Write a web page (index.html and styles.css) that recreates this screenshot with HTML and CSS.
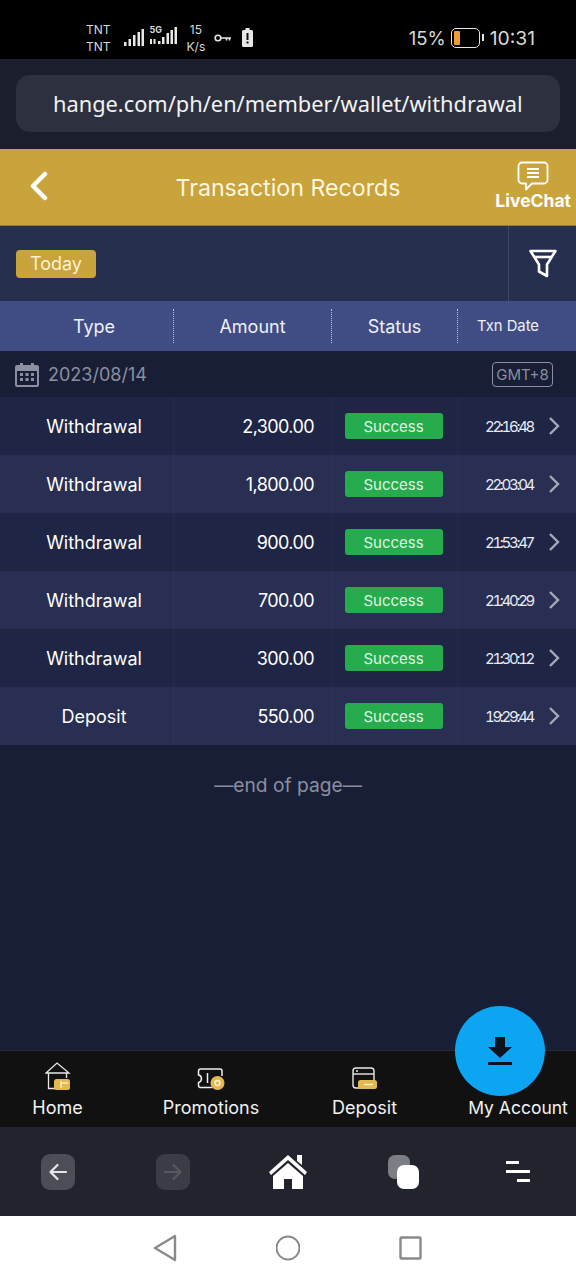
FILE: index.html
```html
<!DOCTYPE html>
<html lang="en">

<head>
  <meta charset="UTF-8" />
  <meta name="viewport" content="width=device-width, initial-scale=1.0" />
  <title>Transaction Records</title>
  <link rel="stylesheet" href="styles.css">
</head>

<body>
  <div class="phone">
    <!-- android status bar -->
    <div class="status-bar">
      <div class="carriers"><span>TNT</span><span>TNT</span></div>
      <svg class="signal" width="20" height="18" viewBox="0 0 20 18" fill="#e8e8e8">
        <rect x="0" y="13" width="2.5" height="4" /><rect x="4.5" y="10" width="2.5" height="7" /><rect x="9" y="6" width="2.5" height="11" /><rect x="13.500" y="3" width="2.500" height="14" /><rect x="17.500" y="0" width="2.500" height="17" />
      </svg>
      <div class="signal-5g">
        <svg width="27" height="18" viewBox="0 0 27 18" fill="#e8e8e8">
          <rect x="0" y="12" width="2" height="5" /><rect x="3.500" y="12" width="2" height="5" /><rect x="8" y="14" width="2.500" height="3" /><rect x="12" y="10" width="2.500" height="7" /><rect x="16.500" y="6" width="2.500" height="11" /><rect x="20.500" y="3" width="2.500" height="14" /><rect x="24.500" y="0" width="2.500" height="17" />
        </svg>
        <span class="label-5g">5G</span>
      </div>
      <div class="speed"><span>15</span><span>K/s</span></div>
      <svg class="key" width="18" height="8" viewBox="0 0 18 8" fill="none" stroke="#e8e8e8" stroke-width="1.600">
        <circle cx="4" cy="4" r="2.800" /><path d="M7 4h10M12.500 4v2.500M15.500 4v2.500" />
      </svg>
      <svg class="saver" width="11" height="19" viewBox="0 0 11 19">
        <path d="M3.500 0h4v2h2a1.500 1.500 0 0 1 1.500 1.500V17.500a1.500 1.500 0 0 1-1.500 1.500h-8A1.500 1.500 0 0 1 0 17.500V3.500A1.500 1.500 0 0 1 1.500 2h2z" fill="#e8e8e8" />
        <rect x="4.500" y="5" width="2" height="7" fill="#111" /><rect x="4.500" y="13.500" width="2" height="2" fill="#111" />
      </svg>
      <div class="status-right">
        <span>15%</span>
        <span class="battery"><span class="battery-level"></span></span>
        <span class="battery-tip"></span>
        <span class="clock">10:31</span>
      </div>
    </div>

    <!-- browser address bar -->
    <div class="address-bar">
      <div class="address-field">hange.com/ph/en/member/wallet/withdrawal</div>
    </div>

    <header class="page-header">
      <svg class="back" width="20" height="30" viewBox="0 0 20 30" fill="none" stroke="#fff" stroke-width="4.500" stroke-linecap="round" stroke-linejoin="round">
        <path d="M16 3 L4 15 L16 27" />
      </svg>
      <h1>Transaction Records</h1>
      <div class="livechat">
        <svg width="32" height="30" viewBox="0 0 32 30" fill="none" stroke="#fff" stroke-width="1.800" stroke-linejoin="round">
          <path d="M5 1.500h22a3.500 3.500 0 0 1 3.500 3.500v14a3.500 3.500 0 0 1-3.500 3.500H15l-6 6v-6H5A3.500 3.500 0 0 1 1.500 19V5A3.500 3.500 0 0 1 5 1.500z" />
          <path d="M10 8h12M10 12h12M10 16h12" />
        </svg>
        <span>LiveChat</span>
      </div>
    </header>

    <div class="filter-row">
      <div class="filter-left"><span class="today">Today</span></div>
      <div class="filter-btn">
        <svg width="28" height="30" viewBox="0 0 28 30" fill="none" stroke="#fff" stroke-width="2.600" stroke-linejoin="round">
          <path d="M1.500 2h25L18 15.500V27l-8-4.500v-7z" /><path d="M5 8h18" />
        </svg>
      </div>
    </div>

    <div class="table-head">
      <div class="head-cell">Type</div>
      <div class="head-cell">Amount</div>
      <div class="head-cell">Status</div>
      <div class="head-cell head-small">Txn Date</div>
    </div>

    <div class="date-row">
      <svg width="24" height="25" viewBox="0 0 24 25" fill="#8b8f9f">
        <path d="M2 3h3V1h3v2h8V1h3v2h3a2 2 0 0 1 2 2v18a2 2 0 0 1-2 2H2a2 2 0 0 1-2-2V5a2 2 0 0 1 2-2z" />
        <rect x="2" y="9" width="20" height="14" fill="#181e35" />
        <rect x="5" y="11" width="3" height="3" /><rect x="10.500" y="11" width="3" height="3" /><rect x="16" y="11" width="3" height="3" /><rect x="5" y="16" width="3" height="3" /><rect x="10.500" y="16" width="3" height="3" /><rect x="16" y="16" width="3" height="3" />
      </svg>
      <span class="date-text">2023/08/14</span>
      <span class="gmt">GMT+8</span>
    </div>

    <div class="rows">
      <div class="row">
        <div class="cell-type">Withdrawal</div><div class="cell-amount">2,300.00</div>
        <div class="cell-status"><span class="badge">Success</span></div>
        <div class="cell-time"><span class="time">22:16:48</span><svg width="12" height="20" viewBox="0 0 12 20" fill="none" stroke="#a6a9b8" stroke-width="2.400"><path d="M2 2l8 8-8 8" /></svg></div>
      </div>
      <div class="row">
        <div class="cell-type">Withdrawal</div><div class="cell-amount">1,800.00</div>
        <div class="cell-status"><span class="badge">Success</span></div>
        <div class="cell-time"><span class="time">22:03:04</span><svg width="12" height="20" viewBox="0 0 12 20" fill="none" stroke="#a6a9b8" stroke-width="2.400"><path d="M2 2l8 8-8 8" /></svg></div>
      </div>
      <div class="row">
        <div class="cell-type">Withdrawal</div><div class="cell-amount">900.00</div>
        <div class="cell-status"><span class="badge">Success</span></div>
        <div class="cell-time"><span class="time">21:53:47</span><svg width="12" height="20" viewBox="0 0 12 20" fill="none" stroke="#a6a9b8" stroke-width="2.400"><path d="M2 2l8 8-8 8" /></svg></div>
      </div>
      <div class="row">
        <div class="cell-type">Withdrawal</div><div class="cell-amount">700.00</div>
        <div class="cell-status"><span class="badge">Success</span></div>
        <div class="cell-time"><span class="time">21:40:29</span><svg width="12" height="20" viewBox="0 0 12 20" fill="none" stroke="#a6a9b8" stroke-width="2.400"><path d="M2 2l8 8-8 8" /></svg></div>
      </div>
      <div class="row">
        <div class="cell-type">Withdrawal</div><div class="cell-amount">300.00</div>
        <div class="cell-status"><span class="badge">Success</span></div>
        <div class="cell-time"><span class="time">21:30:12</span><svg width="12" height="20" viewBox="0 0 12 20" fill="none" stroke="#a6a9b8" stroke-width="2.400"><path d="M2 2l8 8-8 8" /></svg></div>
      </div>
      <div class="row">
        <div class="cell-type">Deposit</div><div class="cell-amount">550.00</div>
        <div class="cell-status"><span class="badge">Success</span></div>
        <div class="cell-time"><span class="time">19:29:44</span><svg width="12" height="20" viewBox="0 0 12 20" fill="none" stroke="#a6a9b8" stroke-width="2.400"><path d="M2 2l8 8-8 8" /></svg></div>
      </div>
    </div>

    <main class="page-end">—end of page—</main>

    <nav class="tab-bar">
      <div class="tab">
        <svg width="26" height="30" viewBox="0 0 26 30" fill="none" stroke="#e8e8e8" stroke-width="1.300">
          <path d="M1 11L12 1l12 10H1z" /><path d="M3.500 11v15.500h10" /><path d="M21.500 11v5" />
          <rect x="9" y="17" width="16" height="11" rx="2.500" fill="#e3b94f" stroke="none" />
          <path d="M16 19v7M16 21h7" stroke="#fff3c9" />
        </svg>
        <span>Home</span>
      </div>
      <div class="tab">
        <svg width="28" height="26" viewBox="0 0 28 26" fill="none" stroke="#f0f0f0" stroke-width="1.500">
          <path d="M3 3h20a2 2 0 0 1 2 2v5M3 3a2 2 0 0 0-1.500 2v4c2 .5 3 2 3 3.500S3 16 1.500 16.500v3A2 2 0 0 0 3 21.500h12" /><path d="M10.500 7v10" />
          <circle cx="20.500" cy="17" r="7" fill="#e3b94f" stroke="none" /><circle cx="20.500" cy="17" r="2.500" stroke="#fff3c9" />
        </svg>
        <span>Promotions</span>
      </div>
      <div class="tab">
        <svg width="26" height="26" viewBox="0 0 26 26" fill="none" stroke="#e8e8e8" stroke-width="1.400">
          <rect x="1" y="2" width="21" height="20" rx="3" /><path d="M1 8h21" /><path d="M4 5h2" />
          <rect x="6" y="14" width="19" height="9" rx="2.500" fill="#e3b94f" stroke="none" /><path d="M12 18.500h9" stroke="#fff3c9" />
        </svg>
        <span>Deposit</span>
      </div>
      <div class="tab tab-account">
        <div class="tab-icon-spacer"></div>
        <span>My Account</span>
      </div>
    </nav>

    <button class="fab" aria-label="Download">
      <svg width="24" height="29" viewBox="0 0 24 29" fill="#0c1220">
        <path d="M7 0h10v10h7L12 21 0 10h7z" /><rect x="0" y="25" width="24" height="3" />
      </svg>
    </button>

    <!-- browser toolbar -->
    <div class="browser-bar">
      <div class="square-btn">
        <svg width="20" height="20" viewBox="0 0 20 20" fill="none" stroke="#e6e6e8" stroke-width="2.200" stroke-linecap="round" stroke-linejoin="round"><path d="M18 10H3M9.500 3L2.500 10l7 7" /></svg>
      </div>
      <div class="square-btn square-off">
        <svg width="20" height="20" viewBox="0 0 20 20" fill="none" stroke="#55585f" stroke-width="2.200" stroke-linecap="round" stroke-linejoin="round"><path d="M2 10h15M10.500 3l7 7-7 7" /></svg>
      </div>
      <svg width="40" height="36" viewBox="0 0 40 36" fill="#fff">
        <path d="M29 1h5v10l-5-4z" />
        <path d="M20 1L39 18l-2 3L20 6 3 21l-2-3z" />
        <path d="M20 9L35 22v13H24V25h-8v10H5V22z" />
      </svg>
      <div class="tabs-icon"><span class="tabs-back"></span><span class="tabs-front"></span></div>
      <div class="menu-icon"><span class="menu-a"></span><span class="menu-b"></span><span class="menu-c"></span></div>
    </div>

    <!-- android nav -->
    <div class="system-nav">
      <svg width="24" height="28" viewBox="0 0 24 28" fill="none" stroke="#8a8a8a" stroke-width="2.400" stroke-linejoin="round"><path d="M22 2v24L2 14z" /></svg>
      <svg width="24" height="26" viewBox="0 0 24 26" fill="none" stroke="#8a8a8a" stroke-width="2"><circle cx="12" cy="13" r="11.500" /></svg>
      <svg width="24" height="24" viewBox="0 0 24 24" fill="none" stroke="#8a8a8a" stroke-width="2.400" stroke-linejoin="round"><rect x="1.500" y="1.500" width="20" height="21" rx="1" /></svg>
    </div>
  </div>
</body>

</html>
```

FILE: styles.css
```css
* {
  box-sizing: border-box;
}

body {
  margin: 0;
  background-color: #181e35;
  color: #fff;
  font-family: 'Inter', 'Noto Sans', sans-serif;
}

.phone {
  position: relative;
  display: flex;
  flex-direction: column;
  width: 576px;
  height: 1280px;
  overflow: hidden;
}

/* status bar */
.status-bar {
  display: flex;
  align-items: center;
  flex-shrink: 0;
  height: 59px;
  padding: 16px 41px 0 86px;
  background-color: #000;
  color: #d8d8d8;
}

.carriers,
.speed {
  display: flex;
  flex-direction: column;
  align-items: center;
  font-size: 12px;
  line-height: 17px;
}

.signal {
  margin-left: 13px;
}

.signal-5g {
  position: relative;
  margin-left: 6px;
}

.label-5g {
  position: absolute;
  top: -2px;
  left: 0;
  font-size: 9px;
  font-weight: 700;
  line-height: 10px;
}

.speed {
  margin-left: 10px;
}

.key {
  margin-left: 9px;
}

.saver {
  margin-left: 10px;
}

.status-right {
  display: flex;
  align-items: center;
  margin-left: auto;
  font-size: 18.500px;
}

.battery {
  display: block;
  width: 29px;
  height: 20px;
  margin-left: 5px;
  padding: 2px;
  border: 1.500px solid #e4e4e4;
  border-radius: 5px;
}

.battery-level {
  display: block;
  width: 6px;
  height: 100%;
  border-radius: 1px;
  background-color: #f09a37;
}

.battery-tip {
  display: block;
  width: 2px;
  height: 7px;
  margin-left: 2px;
  background-color: #e4e4e4;
}

.clock {
  margin-left: 6px;
  font-size: 19.300px;
}

/* address bar */
.address-bar {
  flex-shrink: 0;
  height: 90px;
  padding: 16px 16px 15px;
  background-color: #1b1f2d;
  border-bottom: 2px solid #1b1f2d;
}

.address-field {
  display: flex;
  align-items: center;
  height: 57px;
  padding-left: 37px;
  border-radius: 14px;
  background-color: #2d303f;
  color: #f2f2f2;
  font-family: 'Noto Sans', sans-serif;
  font-size: 21.800px;
  white-space: nowrap;
}

/* page header */
.page-header {
  position: relative;
  display: flex;
  align-items: center;
  justify-content: center;
  flex-shrink: 0;
  height: 77px;
  padding-top: 1px;
  background-color: #c9a33c;
  border-bottom: 1px solid #8f7a3e;
}

.page-header h1 {
  margin: 0;
  color: #fdf6df;
  font-size: 23.200px;
  font-weight: 400;
}

.back {
  position: absolute;
  top: 22px;
  left: 29px;
}

.livechat {
  position: absolute;
  top: 12px;
  right: 5px;
  display: flex;
  flex-direction: column;
  align-items: center;
  font-size: 17.500px;
  font-weight: 700;
  line-height: 20px;
}

.filter-row {
  display: flex;
  flex-shrink: 0;
  height: 75px;
  background-color: #272f4f;
}

.filter-left {
  display: flex;
  flex: 1;
  align-items: center;
  padding-left: 16px;
}

.today {
  display: flex;
  align-items: center;
  justify-content: center;
  width: 80px;
  height: 28px;
  border-radius: 4px;
  background-color: #c9a33c;
  color: #fdf2d0;
  font-size: 18px;
}

.filter-btn {
  display: flex;
  align-items: center;
  justify-content: center;
  width: 68px;
  border-left: 1px solid #3f4767;
}

/* table */
.table-head,
.row {
  display: grid;
  grid-template-columns: 173px 158px 126px 119px;
}

.table-head {
  flex-shrink: 0;
  align-items: center;
  height: 50px;
  background-color: #404d84;
  color: #eef0f8;
}

.head-cell {
  display: flex;
  align-items: center;
  justify-content: center;
  height: 34px;
  font-size: 18px;
  border-left: 1px dotted #b7bfdc;
}

.head-cell:first-child {
  padding-left: 15px;
  border-left: none;
}

.head-small {
  padding-right: 18px;
  font-size: 14.800px;
}

.date-row {
  display: flex;
  align-items: center;
  flex-shrink: 0;
  height: 46px;
  padding: 0 23px 0 15px;
  background-color: #181e35;
  color: #8b8f9f;
}

.date-text {
  margin-left: 9px;
  font-size: 18px;
}

.gmt {
  display: flex;
  align-items: center;
  justify-content: center;
  width: 61px;
  height: 25px;
  margin-left: auto;
  border: 1.500px solid #8b8f9f;
  border-radius: 4px;
  font-size: 15px;
}

.row {
  align-items: center;
  height: 58px;
  background-color: #1f2545;
  font-size: 18px;
}

.row:nth-child(even) {
  background-color: #282f52;
}

.cell-type,
.cell-amount,
.cell-status,
.cell-time {
  display: flex;
  align-items: center;
  height: 100%;
  border-left: 1px solid rgba(255, 255, 255, 0.03);
}

.cell-type {
  justify-content: center;
  padding-left: 15px;
  border-left: none;
}

.cell-amount {
  justify-content: flex-end;
  padding-right: 17px;
  letter-spacing: -0.600px;
}

.cell-status {
  justify-content: center;
  padding-right: 2px;
}

.badge {
  display: flex;
  align-items: center;
  justify-content: center;
  width: 98px;
  height: 26px;
  border-radius: 3px;
  background-color: #27ac4d;
  color: #dff5e2;
  font-size: 15px;
}

.cell-time {
  padding-left: 27px;
}

.time {
  width: 63px;
  color: #e8eaf5;
  font-size: 15px;
  font-variant-numeric: tabular-nums;
  letter-spacing: -2.300px;
}

.page-end {
  flex: 1;
  padding-top: 28px;
  text-align: center;
  color: #8b8f9f;
  font-size: 19.200px;
}

/* bottom tabs */
.tab-bar {
  display: grid;
  grid-template-columns: 115px 192px 115px 154px;
  flex-shrink: 0;
  height: 77px;
  background-color: #111;
  border-top: 1px solid #2a2a30;
  color: #f1f1f1;
}

.tab {
  display: flex;
  flex-direction: column;
  align-items: center;
  justify-content: flex-end;
  padding-bottom: 8px;
  font-size: 18px;
  line-height: 22px;
  white-space: nowrap;
}

.tab svg {
  margin-bottom: 5px;
}

.tab-account {
  padding-left: 38px;
  font-size: 17.500px;
}

.tab-icon-spacer {
  height: 31px;
}

.fab {
  position: absolute;
  top: 1006px;
  left: 455px;
  display: flex;
  align-items: center;
  justify-content: center;
  width: 90px;
  height: 90px;
  padding: 0;
  border: none;
  border-radius: 50%;
  background-color: #0ba5f2;
}

/* browser toolbar */
.browser-bar {
  display: grid;
  grid-template-columns: repeat(5, 1fr);
  align-items: center;
  justify-items: center;
  flex-shrink: 0;
  height: 89px;
  background-color: #21242d;
}

.square-btn {
  display: flex;
  align-items: center;
  justify-content: center;
  width: 34px;
  height: 36px;
  border-radius: 9px;
  background-color: #4b4e57;
}

.square-off {
  background-color: #3a3d46;
}

.tabs-icon {
  position: relative;
  width: 31px;
  height: 34px;
}

.tabs-back {
  position: absolute;
  top: 0;
  left: 0;
  width: 22px;
  height: 24px;
  border-radius: 7px;
  background-color: #7b7e85;
}

.tabs-front {
  position: absolute;
  right: 0;
  bottom: 0;
  width: 22px;
  height: 24px;
  border-radius: 7px;
  background-color: #fff;
}

.menu-icon {
  display: flex;
  flex-direction: column;
  gap: 6px;
  width: 24px;
}

.menu-icon span {
  display: block;
  height: 3px;
  background-color: #fff;
}

.menu-a {
  width: 13px;
}

.menu-b {
  width: 24px;
}

.menu-c {
  width: 13px;
  margin-left: 11px;
}

/* android nav */
.system-nav {
  display: flex;
  align-items: center;
  justify-content: center;
  gap: 99px;
  flex: none;
  height: 64px;
  background-color: #fff;
}
```
